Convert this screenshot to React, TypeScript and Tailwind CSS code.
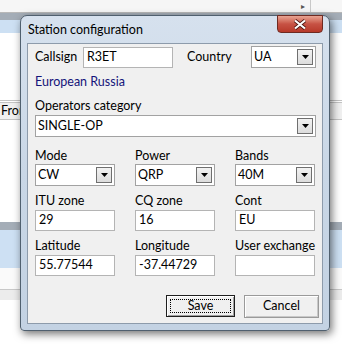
import React from "react";

const font = { fontFamily: 'Lato, "Noto Sans", Arial, sans-serif' };

const Arrow: React.FC = () => (
  <div className="absolute right-[2px] top-1/2 -translate-y-1/2 w-[16px] h-[16px] border border-[#6f6f6f] bg-gradient-to-b from-[#f2f2f2] to-[#dcdcdc] flex items-center justify-center">
    <svg width="7" height="4" viewBox="0 0 7 4">
      <path d="M0 0h7L3.5 4z" fill="#000" />
    </svg>
  </div>
);

const Select: React.FC<{ value: string; className?: string }> = ({
  value,
  className = "",
}) => (
  <div
    className={`relative h-[22px] bg-white border border-[#a2a2a2] flex items-center pl-[2px] text-[12.5px] text-black ${className}`}
  >
    {value}
    <Arrow />
  </div>
);

const Input: React.FC<{ value: string; className?: string }> = ({
  value,
  className = "",
}) => (
  <div
    className={`h-[21px] bg-white border border-[#b4b4b4] flex items-center pl-[3px] text-[12.5px] text-black ${className}`}
  >
    {value}
  </div>
);

const Field: React.FC<{ label: string; children: React.ReactNode }> = ({
  label,
  children,
}) => (
  <div className="flex flex-col">
    <span className="h-[16px] leading-[16px] text-[12.5px] whitespace-nowrap">
      {label}
    </span>
    {children}
  </div>
);

export default function App() {
  return (
    <div
      className="relative w-[342px] h-[344px] overflow-hidden bg-white text-black"
      style={font}
    >
      {/* app behind the dialog */}
      <div className="flex flex-col">
        <div className="relative h-[13px] bg-[#f6f6f6] border-b border-[#b8b8b8]">
          <span className="absolute left-[301px] top-0 text-[8px] leading-[12px] text-[#555]">
            ▸
          </span>
          <div className="absolute left-[310px] top-0 h-full border-l border-[#c8c8c8]" />
        </div>
        <div className="h-[7px] bg-[#a4adb7]" />
        <div className="h-[13px] bg-[#cde0f3]" />
        <div className="h-[67px] bg-white" />
        <div className="h-[3px] border-t border-b border-[#c4c4c4]" />
        <div className="h-[17px] bg-[#f0f0f0] border-b border-[#c4c4c4] text-[12.5px] leading-[16px] pl-[1px]">
          Fron
        </div>
        <div className="h-[102px] bg-white" />
        <div className="h-[8px] bg-[#a4adb7]" />
        <div className="h-[38px] bg-[#cde0f3]" />
        <div className="h-[22px] bg-[#fafafa] border-b border-[#c8c8c8]" />
        <div className="h-[10px] bg-[#ececec]" />
        <div className="h-[60px] bg-white" />
      </div>

      {/* dialog window */}
      <div className="absolute left-[20px] top-[15px] w-[310px] h-[316px] rounded-t-[7px] rounded-b-[4px] border border-[#50606f] bg-gradient-to-b from-[#d6e1ee] via-[#c9d7e6] to-[#c3d2e3] shadow-[2px_3px_8px_rgba(0,0,0,0.55)] flex flex-col px-[6px] pb-[6px]">
        <div className="h-[27px] flex items-start justify-between">
          <span className="pl-[1px] pt-[6px] text-[12.5px] leading-[16px]">
            Station configuration
          </span>
          <div className="w-[46px] h-[18px] mt-[-1px] rounded-b-[4px] border border-[#6e2a22] bg-gradient-to-b from-[#e8a493] via-[#c75244] to-[#b7392a] flex items-center justify-center">
            <svg width="14" height="11" viewBox="0 0 14 11">
              <path
                d="M2 1.5L12 9.5M12 1.5L2 9.5"
                stroke="#4a1410"
                strokeWidth="3.6"
              />
              <path
                d="M2 1.5L12 9.5M12 1.5L2 9.5"
                stroke="#fff"
                strokeWidth="2.2"
              />
            </svg>
          </div>
        </div>

        <div className="flex-1 bg-[#f0f0f0] border border-[#8d9bab] pl-[7px] pr-[3px] pt-[1px] flex flex-col">
          <div className="h-[24px] flex items-center text-[12.5px]">
            <span className="w-[48px]">Callsign</span>
            <Input value="R3ET" className="w-[90px]" />
            <span className="ml-[14px] w-[64px]">Country</span>
            <Select value="UA" className="w-[65px]" />
          </div>
          <div className="mt-[5px] h-[16px] leading-[16px] text-[12.5px] text-[#14147a]">
            European Russia
          </div>
          <div className="mt-[8px] h-[16px] leading-[16px] text-[12.5px]">
            Operators category
          </div>
          <Select value="SINGLE-OP" className="mt-[1px] w-[281px]" />

          <div className="mt-[11px] grid grid-cols-[80px_80px_80px] gap-x-[20px] gap-y-[7px]">
            <Field label="Mode">
              <Select value="CW" />
            </Field>
            <Field label="Power">
              <Select value="QRP" />
            </Field>
            <Field label="Bands">
              <Select value="40M" />
            </Field>
            <Field label="ITU zone">
              <Input value="29" className="mt-[1px]" />
            </Field>
            <Field label="CQ zone">
              <Input value="16" className="mt-[1px]" />
            </Field>
            <Field label="Cont">
              <Input value="EU" className="mt-[1px]" />
            </Field>
            <Field label="Latitude">
              <Input value="55.77544" className="mt-[1px]" />
            </Field>
            <Field label="Longitude">
              <Input value="-37.44729" className="mt-[1px]" />
            </Field>
            <Field label="User exchange">
              <Input value="" className="mt-[1px]" />
            </Field>
          </div>

          <div className="mt-[19px] flex justify-end gap-[9px] text-[12.5px]">
            <button className="relative w-[69px] h-[22px] bg-[#f0f0f0] border border-[#1e1e1e] shadow-[inset_1px_1px_0_#fff,inset_-1px_-1px_0_#a0a0a0]">
              <span className="absolute inset-[3px] border border-dotted border-black" />
              Save
            </button>
            <button className="w-[75px] h-[23px] bg-[#f0f0f0] border border-[#9a9a9a] shadow-[inset_1px_1px_0_#fff,inset_-1px_-1px_0_#c8c8c8]">
              Cancel
            </button>
          </div>
        </div>
      </div>
    </div>
  );
}
